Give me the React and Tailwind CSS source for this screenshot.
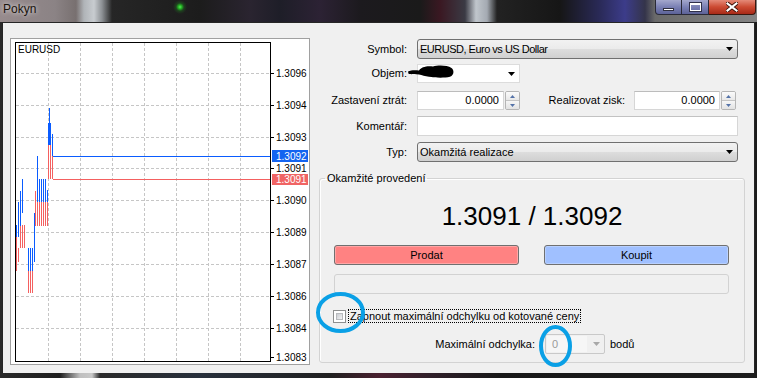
import React from 'react';

// tick segments [x, yTop, yBottom]
const blue = [
  [49, 108, 145], [48, 123, 145], [50, 123, 145], [52, 134, 156],
  [37, 156, 202], [39, 179, 202], [41, 179, 202], [43, 179, 202], [45, 179, 202], [47, 190, 202],
  [22, 179, 213], [20, 191, 226], [18, 202, 237], [16, 225, 237],
  [34, 213, 262], [28, 248, 271], [30, 248, 271], [32, 248, 271],
];
const red = [
  [48, 145, 179], [50, 145, 179], [52, 145, 179],
  [35, 191, 226], [37, 202, 226], [39, 202, 226], [41, 202, 226], [43, 202, 226], [45, 202, 226], [47, 202, 226],
  [16, 237, 271], [18, 248, 262], [20, 225, 248], [22, 225, 248], [24, 225, 248],
  [28, 259, 293], [30, 259, 293], [32, 259, 293],
];
const gridX = [48, 80, 112, 144, 176, 208, 240];
const gridY = [73, 105, 137, 168, 200, 232, 264, 296, 328];
const prices = [
  ['1.3096', 73], ['1.3094', 105], ['1.3093', 137], ['1.3091', 168], ['1.3090', 200],
  ['1.3089', 232], ['1.3087', 264], ['1.3086', 296], ['1.3084', 328], ['1.3083', 357],
];
const FONT = 'Liberation Sans, Arial, sans-serif';

const Chart = () => (
  <div className="ml-[7px] mt-[15px] w-[300px] h-[327px] border border-[#a0a0a0] bg-white">
    <svg width="298" height="325" viewBox="11 39 298 325" className="block">
      <g shapeRendering="crispEdges">
        {gridY.map((y) => (
          <line key={'h' + y} x1="16" x2="270" y1={y + 0.5} y2={y + 0.5} stroke="#c6c6c6" strokeDasharray="3 2" />
        ))}
        {gridX.map((x) => (
          <line key={'v' + x} x1={x + 0.5} x2={x + 0.5} y1="43" y2="361" stroke="#c6c6c6" strokeDasharray="3 2" />
        ))}
        <rect x="15.5" y="42.5" width="255" height="319" fill="none" stroke="#000" />
        {prices.map(([p, y]) => (
          <rect key={'t' + p + y} x="271" y={y} width="3" height="1" fill="#000" />
        ))}
        {red.map(([x, a, b], i) => (
          <rect key={'r' + i} x={x} y={a} width="1" height={b - a} fill="#f46060" />
        ))}
        {blue.map(([x, a, b], i) => (
          <rect key={'b' + i} x={x} y={a} width="1" height={b - a} fill="#0a5cff" />
        ))}
        <rect x="53" y="156" width="217" height="1" fill="#0a5cff" />
        <rect x="53" y="179" width="217" height="1" fill="#f46060" />
        <rect x="272" y="150" width="36" height="12" fill="#1464f0" />
        <rect x="272" y="174" width="36" height="11" fill="#f06464" />
      </g>
      <text x="18" y="53" fontSize="10" fontFamily={FONT} fill="#000">EURUSD</text>
      {prices.map(([p, y]) => (
        <text key={p + y} x="276" y={y + 3.5} fontSize="10" fontFamily={FONT} fill="#000">{p}</text>
      ))}
      <text x="276" y="159.5" fontSize="10" fontFamily={FONT} fill="#fff">1.3092</text>
      <text x="276" y="183" fontSize="10" fontFamily={FONT} fill="#fff">1.3091</text>
    </svg>
  </div>
);

const Arrow = ({ color = '#000' }) => (
  <svg width="7" height="4" className="block shrink-0">
    <path d="M0 0h7L3.5 4z" fill={color} />
  </svg>
);

const Combo = ({ children, tight }) => (
  <div className="w-[321px] h-[20px] rounded-[3px] border border-[#707070] bg-[linear-gradient(#f2f2f2_0%,#ebebeb_48%,#dddddd_52%,#d0d0d0_100%)] flex items-center pl-[2px] pr-[4px]">
    <span className={tight ? 'tracking-[-0.5px]' : ''}>{children}</span>
    <div className="ml-auto"><Arrow /></div>
  </div>
);

const Spin = () => (
  <div className="ml-[1px] w-[15px] h-full flex flex-col border border-[#b5b5b5] rounded-[2px] overflow-hidden">
    <div className="flex-1 flex items-center justify-center border-b border-[#c4c4c4] bg-[linear-gradient(#fbfbfb,#e8e8e8)]">
      <svg width="5" height="3" className="block"><path d="M2.5 0L5 3H0z" fill="#5472a8" /></svg>
    </div>
    <div className="flex-1 flex items-center justify-center bg-[linear-gradient(#f6f6f6,#e2e2e2)]">
      <svg width="5" height="3" className="block"><path d="M0 0h5L2.5 3z" fill="#5472a8" /></svg>
    </div>
  </div>
);

const NumBox = ({ w }) => (
  <div className={`${w} h-full bg-white border border-[#d6d6d6] border-t-[#bcbcbc] flex items-center justify-end pr-[4px]`}>
    0.0000
  </div>
);

const Form = () => (
  <div className="ml-[9px] w-[427px] flex flex-col">
    <div className="mt-[16px] flex items-center h-[20px]">
      <div className="w-[88px] text-right">Symbol:</div>
      <div className="ml-[10px]"><Combo tight>EURUSD, Euro vs US Dollar</Combo></div>
    </div>

    <div className="relative mt-[5px] flex items-center h-[19px]">
      <div className="w-[88px] text-right">Objem:</div>
      <div className="ml-[10px] w-[103px] h-full bg-white border border-[#dcdcdc] flex items-center justify-end pr-[4px]">
        <Arrow />
      </div>
      <svg width="46" height="13" className="absolute left-[89px] top-[1px]">
        <path d="M0 6.5C3 5 7 5 11 5.5C13 2 19 0.5 25 1.5C30 0 39 0 43.5 3C46.5 5.5 46 10 42 11.8C36 13.2 27 12.8 21 11.8C17 11.2 14 10 11 9.4C7 9.2 3 9.6 0.5 8.8Z" fill="#000" />
      </svg>
    </div>

    <div className="mt-[8px] flex items-center h-[19px]">
      <div className="w-[88px] text-right">Zastavení ztrát:</div>
      <div className="ml-[10px] flex h-full">
        <NumBox w="w-[87px]" />
        <Spin />
      </div>
      <div className="w-[105px] text-right">Realizovat zisk:</div>
      <div className="ml-[9px] flex h-full">
        <NumBox w="w-[86px]" />
        <Spin />
      </div>
    </div>

    <div className="mt-[6px] flex items-center h-[20px]">
      <div className="w-[88px] text-right">Komentář:</div>
      <div className="ml-[10px] w-[321px] h-full bg-white border border-[#d6d6d6] border-t-[#c2c2c2]" />
    </div>

    <div className="mt-[6px] flex items-center h-[20px]">
      <div className="w-[88px] text-right">Typ:</div>
      <div className="ml-[10px]"><Combo>Okamžitá realizace</Combo></div>
    </div>

    <fieldset className="mt-[9px] w-[426px] border border-[#d3d3d3] rounded-[3px] shadow-[inset_1px_1px_0_#fff] pb-[8px]">
      <legend className="ml-[5px] px-[2px] leading-[14px]">Okamžité provedení</legend>
      <div className="mt-[16px] h-[30px] flex items-center justify-center text-[26px] leading-[30px]">
        1.3091 / 1.3092
      </div>
      <div className="mt-[14px] flex pl-[14px] gap-[25px]">
        <div className="w-[185px] h-[20px] rounded-[3px] border border-[#707070] bg-[#ff8282] shadow-[inset_0_0_0_1px_#ffa6a6] flex items-center justify-center">
          Prodat
        </div>
        <div className="w-[185px] h-[20px] rounded-[3px] border border-[#707070] bg-[#a0c0ff] shadow-[inset_0_0_0_1px_#b8d0ff] flex items-center justify-center">
          Koupit
        </div>
      </div>
      <div className="mt-[9px] ml-[14px] w-[395px] h-[20px] rounded-[3px] border border-[#d2d2d2] bg-[#f0f0f0]" />
      <div className="mt-[15px] ml-[13px] flex items-center h-[14px]">
        <div className="w-[13px] h-[13px] border border-[#8e8f8f] bg-white p-[2px]">
          <div className="w-full h-full border border-[#b8babd] bg-[linear-gradient(135deg,#c9ccd1,#f4f4f4)]" />
        </div>
        <div className="ml-[2px] h-[14px] border border-dotted border-black px-[1px] flex items-center">
          Zapnout maximální odchylku od kotované ceny
        </div>
      </div>
      <div className="mt-[11px] flex items-center h-[20px]">
        <div className="w-[215px] text-right">Maximální odchylka:</div>
        <div className="ml-[10px] w-[60px] h-full border border-[#c9c9c9] rounded-[2px] bg-[#f0f0f0] flex items-center">
          <div className="ml-[1px] w-[40px] h-[16px] bg-[#f6f6f6] flex items-center pl-[5px] text-[#9a9a9a]">0</div>
          <div className="ml-auto mr-[4px]"><Arrow color="#a8a8a8" /></div>
        </div>
        <div className="ml-[5px]">bodů</div>
      </div>
    </fieldset>
  </div>
);

const TitleBar = () => (
  <div className="h-[22px] flex items-start justify-between bg-[radial-gradient(circle_at_180px_7px,#55ee55_0px,#22aa22_2px,rgba(30,100,30,0.5)_4px,transparent_7px),linear-gradient(90deg,#978b8d_0px,#8b8385_55px,#787070_76px,#b0b4b8_84px,#c8ccd0_94px,#8c9094_102px,#262626_112px,#1c1c1c_200px,#2a2430_250px,#1e1e28_280px,#2c2234_320px,#1c1a1e_360px,#1a1a1a_420px,#3a1822_440px,#3a3a44_465px,#c0c6cc_476px,#a4aab2_487px,#222222_497px,#161616_560px,#2a2a58_600px,#3c3c8a_625px,#34344a_645px,#6a6a6a_655px,#858585_757px)]">
    <div className="pl-[3px] pt-[2px] text-[12px] leading-[14px] text-[#1a140e] [text-shadow:0_0_5px_rgba(255,255,255,0.9)]">
      Pokyn
    </div>
    <div className="flex h-[15px] mr-[1px]">
      <div className="w-[27px] h-full border border-[#2a2a38] border-t-0 rounded-bl-[4px] bg-[linear-gradient(#a4a8cc,#7a80b4_50%,#5c6298)] flex items-center justify-center">
        <div className="w-[11px] h-[3px] mt-[4px] bg-white border-[0.5px] border-[#303040]" />
      </div>
      <div className="w-[27px] h-full border border-[#2a2a38] border-t-0 border-l-0 bg-[linear-gradient(#a4a8cc,#7a80b4_50%,#5c6298)] flex items-center justify-center">
        <div className="w-[11px] h-[8px] border border-white border-t-[2px] shadow-[0_0_0_1px_#30304a]" />
      </div>
      <div className="w-[47px] h-full border border-[#3a1810] border-t-0 border-l-0 rounded-br-[4px] bg-[linear-gradient(#e48a78,#cc4a32_50%,#a82a18)] flex items-center justify-center">
        <svg width="12" height="10" className="block">
          <path d="M1.5 1.5L10.5 8.5M10.5 1.5L1.5 8.5" stroke="#3a1008" strokeWidth="4" strokeLinecap="square" />
          <path d="M1.5 1.5L10.5 8.5M10.5 1.5L1.5 8.5" stroke="#fff" strokeWidth="2.2" strokeLinecap="square" />
        </svg>
      </div>
    </div>
  </div>
);

export default function App() {
  return (
    <div className="relative w-[757px] h-[378px] overflow-hidden flex flex-col bg-[linear-gradient(90deg,#2a2a2a_0px,#1e1e1e_60px,#bfbfbf_80px,#c8c8c8_92px,#2a2a2a_100px,#28303c_200px,#202020_330px,#4a2030_380px,#30202a_430px,#181818_500px,#1c1c1c_757px)] font-['Liberation_Sans',Arial,sans-serif] text-[11px] text-black">
      <TitleBar />
      <div className="mx-[2px] h-[351px] border border-b-0 border-[#262626] bg-[#f0f0f0] flex">
        <Chart />
        <Form />
      </div>
      <svg width="757" height="378" className="absolute left-0 top-0 pointer-events-none">
        <ellipse cx="340.5" cy="312.5" rx="22.5" ry="18.5" fill="none" stroke="#0aa0e6" strokeWidth="4" />
        <ellipse cx="555.5" cy="346" rx="14.5" ry="19" fill="none" stroke="#0aa0e6" strokeWidth="4" />
      </svg>
    </div>
  );
}
